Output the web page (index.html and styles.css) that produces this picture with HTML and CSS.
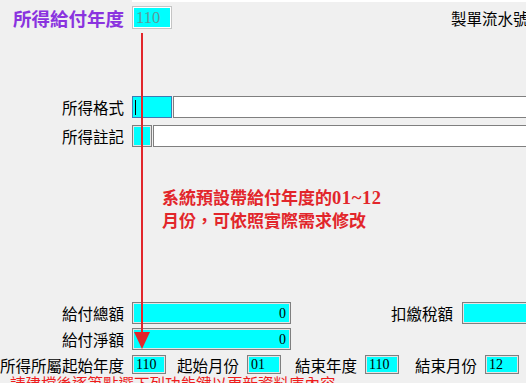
FILE: index.html
```html
<!DOCTYPE html>
<html lang="zh-Hant">
<head>
<meta charset="utf-8">
<title>所得給付</title>
<link rel="stylesheet" href="styles.css">
</head>
<body>
<div class="form">
  <div class="topline"></div>

  <div class="row row-title">
    <div class="label title">所得給付年度</div>
    <div class="box box-dis">110</div>
    <div class="serial">製單流水號</div>
  </div>

  <div class="row row-fmt">
    <div class="label">所得格式</div>
    <div class="box box-focus w40"><span class="caret"></span></div>
    <div class="box box-white"></div>
  </div>

  <div class="row row-note">
    <div class="label">所得註記</div>
    <div class="box w20"></div>
    <div class="box box-white"></div>
  </div>

  <div class="hint">系統預設帶給付年度的<span class="num">01~12</span><br>月份，可依照實際需求修改</div>

  <div class="row row-total">
    <div class="label">給付總額</div>
    <div class="box w159 right">0</div>
    <div class="label label-tax">扣繳稅額</div>
    <div class="box w100"></div>
  </div>

  <div class="row row-net">
    <div class="label">給付淨額</div>
    <div class="box w159 right">0</div>
  </div>

  <div class="row row-period">
    <div class="label">所得所屬起始年度</div>
    <div class="box small">110</div>
    <div class="plabel p1">起始月份</div>
    <div class="box small">01</div>
    <div class="plabel p2">結束年度</div>
    <div class="box small">110</div>
    <div class="plabel p3">結束月份</div>
    <div class="box small">12</div>
  </div>

  <div class="warn">請建檔後逐筆點選下列功能鍵以更新資料庫內容</div>
</div>

<svg class="arrow" width="526" height="383" viewBox="0 0 526 383" aria-hidden="true">
  <line x1="142" y1="33" x2="142" y2="335" stroke="#e2262b" stroke-width="2"/>
  <polygon points="134,332 150,332 142,349" fill="#e2262b"/>
</svg>
</body>
</html>
```

FILE: styles.css
```css
html, body {
  margin: 0;
  padding: 0;
  width: 526px;
  height: 383px;
  overflow: hidden;
  background: #f0f0f0;
}

body {
  position: relative;
  font-family: "Noto Sans CJK TC", "Liberation Sans", sans-serif;
  font-size: 15.5px;
  color: #000;
}

.form {
  display: flex;
  flex-direction: column;
  width: 526px;
}

.topline {
  height: 2px;
  margin-left: 132px;
  background: #ffffff;
}

.row {
  display: flex;
  align-items: center;
  white-space: nowrap;
  height: 22px;
}

.row > * {
  flex: none;
}

.label {
  width: 124px;
  margin-right: 8px;
  text-align: right;
  line-height: 18px;
}

.title {
  font-size: 18.5px;
  font-weight: bold;
  color: #8a33df;
  line-height: 22px;
}

.row-title {
  margin-top: 4px;
  height: 23px;
}

.serial {
  margin-left: 279px;
  line-height: 18px;
}

.row-fmt { margin-top: 67px; }
.row-note { margin-top: 7px; }
.row-total { margin-top: 71px; }
.row-net { margin-top: 4px; }
.row-period { margin-top: 5px; height: 19px; }

.box {
  box-sizing: border-box;
  height: 100%;
  background: #00ffff;
  border: 1px solid #7f7f7f;
  box-shadow: inset 0 0 0 1px #e4e4e4;
  font-family: "Liberation Serif", serif;
  font-size: 14px;
  line-height: 17px;
  padding: 0 3px;
  color: #000;
  display: flex;
  align-items: center;
}

.box-dis {
  width: 40px;
  border-color: #c4c4c4;
  box-shadow: inset 0 0 0 1px #ffffff;
  font-size: 16.5px;
  color: #5c9c9c;
}

.box-focus {
  border-color: #3d7ab3;
  box-shadow: none;
}

.caret {
  display: block;
  width: 1px;
  height: 15px;
  background: #000;
  margin-left: -1px;
}

.box-white {
  width: 420px;
  margin-left: 1px;
  background: #ffffff;
  box-shadow: none;
}

.w40 { width: 40px; }
.w20 { width: 20px; }
.w159 { width: 159px; }
.w100 { width: 100px; }

.right {
  justify-content: flex-end;
  padding-right: 4px;
}

.label-tax {
  width: auto;
  margin-left: 100px;
  margin-right: 9px;
}

.small {
  width: 34px;
}

.plabel {
  line-height: 18px;
  margin-right: 8px;
}

.p1 { margin-left: 11px; }
.p2 { margin-left: 14px; }
.p3 { margin-left: 16px; }

.hint {
  margin-top: 39px;
  margin-left: 162px;
  font-size: 17px;
  font-weight: bold;
  line-height: 22px;
  color: #e2262b;
}

.num {
  font-family: "Liberation Serif", serif;
  font-size: 18.5px;
  letter-spacing: 0.6px;
}

.warn {
  margin-left: 10px;
  font-size: 15.5px;
  line-height: 18px;
  color: #ee1c1c;
  white-space: nowrap;
}

.arrow {
  position: absolute;
  left: 0;
  top: 0;
  pointer-events: none;
}
```
